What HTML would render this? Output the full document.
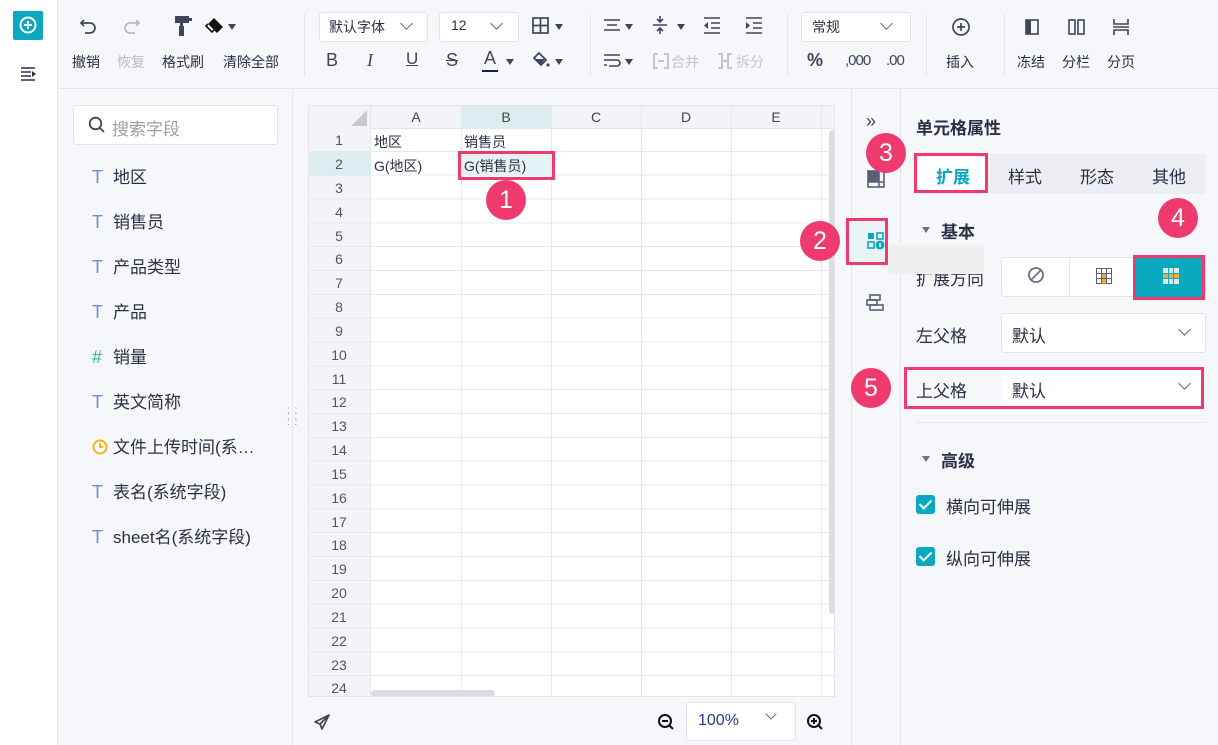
<!DOCTYPE html>
<html><head><meta charset="utf-8">
<style>
*{margin:0;padding:0;box-sizing:border-box}
body{width:1218px;height:745px;overflow:hidden;background:#f6f7fa;font-family:"Liberation Sans","Noto Sans CJK SC",sans-serif;color:#2b2f45;position:relative;font-size:15px}
.a{position:absolute}
.tb{font-size:14px;color:#2b2f45}
.dd{background:#fff;border:1px solid #e1e3ea;border-radius:3px}
.chev{position:absolute;width:9px;height:9px;border-right:1.6px solid #666b7d;border-bottom:1.6px solid #666b7d;transform:rotate(45deg)}
.tri{position:absolute;width:0;height:0;border-left:4px solid transparent;border-right:4px solid transparent;border-top:6px solid #40455c}
.fi{position:absolute;left:92px;font-size:17px;color:#2b2f45}
.fi b{display:inline-block;width:21px;color:#6a8fd8;font-weight:normal;font-size:18px}
.rn{position:absolute;left:308px;width:62px;text-align:center;font-size:14px;color:#555}
.circ{position:absolute;width:40px;height:40px;border-radius:50%;background:#ef3a6e;color:#fff;font-size:25px;text-align:center;line-height:40px}
.pk{position:absolute;border:3px solid #ef3a6e}
.cb{position:absolute;width:19px;height:19px;background:#0aa9bf;border-radius:3px}
.cb:after{content:"";position:absolute;left:6px;top:2px;width:5px;height:10px;border-right:2.5px solid #fff;border-bottom:2.5px solid #fff;transform:rotate(45deg)}
</style></head><body>
<div class="a" style="left:0;top:0;width:58px;height:745px;background:#fff;border-right:1px solid #e3e5ea"></div>
<div class="a" style="left:13px;top:11px;width:30px;height:29px;background:#0aa9bf;border-radius:2px"></div>
<svg class="a" style="left:18px;top:15px" width="20" height="20" viewBox="0 0 20 20"><circle cx="10" cy="10" r="7.5" fill="none" stroke="#fff" stroke-width="2"/><path d="M10 6v8M6 10h8" stroke="#fff" stroke-width="2"/></svg>
<svg class="a" style="left:20px;top:66px" width="18" height="16" viewBox="0 0 18 16"><path d="M1 2h14M1 6h10M1 10h10M1 14h14" stroke="#2b2f45" stroke-width="1.6"/><path d="M12 5l4 3-4 3z" fill="#2b2f45"/></svg>
<div class="a" style="left:58px;top:0;width:1160px;height:89px;background:#f6f7fa;border-bottom:1px solid #e3e5ea"></div>
<svg class="a" style="left:79px;top:17px" width="20" height="18" viewBox="0 0 20 18"><path d="M5 3L2 6l3 3M2 6h9a5 5 0 010 10H6" fill="none" stroke="#40455c" stroke-width="1.7"/></svg>
<svg class="a" style="left:121px;top:17px" width="20" height="18" viewBox="0 0 20 18"><path d="M15 3l3 3-3 3M18 6H9a5 5 0 000 10h5" fill="none" stroke="#b8bbc6" stroke-width="1.7"/></svg>
<svg class="a" style="left:175px;top:14px" width="22" height="24" viewBox="0 0 22 24"><rect x="0" y="2" width="14" height="7" fill="#40455c"/><rect x="14" y="4" width="3" height="3" fill="#40455c"/><rect x="5" y="9" width="3" height="3" fill="#40455c"/><rect x="4" y="12" width="5" height="10" fill="#40455c"/></svg>
<svg class="a" style="left:205px;top:16px" width="20" height="20" viewBox="0 0 20 20"><path d="M9 2l9 9-6 6-9-9z" fill="#111"/><path d="M3 8l-2 2 6 6 2-2" fill="#fff" stroke="#111" stroke-width="1.6"/></svg>
<div class="tri" style="left:228px;top:24px"></div>
<div class="a tb" style="left:72px;top:52px">撤销</div>
<div class="a tb" style="left:117px;top:52px;color:#b8bbc6">恢复</div>
<div class="a tb" style="left:162px;top:52px">格式刷</div>
<div class="a tb" style="left:223px;top:52px">清除全部</div>
<div class="a" style="left:304px;top:14px;width:1px;height:62px;background:#e3e5ea"></div>
<div class="a dd" style="left:319px;top:12px;width:109px;height:30px"></div>
<div class="a tb" style="left:329px;top:17px">默认字体</div>
<div class="chev" style="left:402px;top:19px"></div>
<div class="a dd" style="left:439px;top:12px;width:80px;height:30px"></div>
<div class="a tb" style="left:451px;top:17px">12</div>
<div class="chev" style="left:492px;top:19px"></div>
<svg class="a" style="left:532px;top:17px" width="18" height="18" viewBox="0 0 18 18"><rect x="1" y="1" width="15" height="15" fill="none" stroke="#40455c" stroke-width="1.7"/><path d="M8.5 1v15M1 8.5h15" stroke="#40455c" stroke-width="1.7"/></svg>
<div class="tri" style="left:555px;top:24px"></div>
<div class="a" style="left:326px;top:50px;font-size:18px;color:#40455c">B</div>
<div class="a" style="left:367px;top:50px;font-size:18px;color:#40455c;font-style:italic;font-family:'Liberation Serif',serif">I</div>
<div class="a" style="left:406px;top:49px;font-size:17px;color:#40455c;text-decoration:underline">U</div>
<div class="a" style="left:446px;top:50px;font-size:18px;color:#40455c;text-decoration:line-through">S</div>
<div class="a" style="left:484px;top:48px;font-size:18px;color:#40455c">A</div>
<div class="a" style="left:482px;top:70px;width:16px;height:2px;background:#1a1f4a"></div>
<div class="tri" style="left:506px;top:59px"></div>
<svg class="a" style="left:531px;top:51px" width="20" height="20" viewBox="0 0 20 20"><path d="M8 2l7 7-5 5-7-7z" fill="none" stroke="#40455c" stroke-width="1.8"/><path d="M4 8h10l-4 5z" fill="#40455c"/><circle cx="17" cy="14" r="1.6" fill="#40455c"/></svg>
<div class="tri" style="left:555px;top:59px"></div>
<div class="a" style="left:590px;top:14px;width:1px;height:62px;background:#e3e5ea"></div>
<svg class="a" style="left:603px;top:18px" width="18" height="16" viewBox="0 0 18 16"><path d="M1 2h16M4 7h10M1 12h16" stroke="#40455c" stroke-width="1.6"/></svg>
<div class="tri" style="left:625px;top:24px"></div>
<svg class="a" style="left:652px;top:15px" width="16" height="20" viewBox="0 0 16 20"><path d="M1 10h14M8 1v6M8 13v6M5 4l3 3 3-3M5 16l3-3 3 3" fill="none" stroke="#40455c" stroke-width="1.6"/></svg>
<div class="tri" style="left:677px;top:24px"></div>
<svg class="a" style="left:703px;top:17px" width="18" height="17" viewBox="0 0 18 17"><path d="M1 1h16M8 6h9M8 11h9M1 16h16" stroke="#40455c" stroke-width="1.6"/><path d="M5 5l-4 3.5 4 3.5z" fill="#40455c"/></svg>
<svg class="a" style="left:745px;top:17px" width="18" height="17" viewBox="0 0 18 17"><path d="M1 1h16M8 6h9M8 11h9M1 16h16" stroke="#40455c" stroke-width="1.6"/><path d="M1 5l4 3.5-4 3.5z" fill="#40455c"/></svg>
<svg class="a" style="left:603px;top:53px" width="18" height="16" viewBox="0 0 18 16"><path d="M1 2h16M1 7h13a3 3 0 010 6H6M1 12h3" fill="none" stroke="#40455c" stroke-width="1.6"/></svg>
<div class="tri" style="left:625px;top:59px"></div>
<svg class="a" style="left:653px;top:53px" width="16" height="16" viewBox="0 0 16 16"><path d="M1 1h4M1 1v14h4M11 1h4v14h-4M5 8h6" fill="none" stroke="#c2c5cf" stroke-width="2"/></svg>
<div class="a tb" style="left:671px;top:52px;color:#c2c5cf">合并</div>
<svg class="a" style="left:717px;top:53px" width="16" height="16" viewBox="0 0 16 16"><path d="M1 1h4v14H1M15 1h-4v14h4M5 8h6" fill="none" stroke="#c2c5cf" stroke-width="2"/></svg>
<div class="a tb" style="left:736px;top:52px;color:#c2c5cf">拆分</div>
<div class="a" style="left:787px;top:14px;width:1px;height:62px;background:#e3e5ea"></div>
<div class="a dd" style="left:801px;top:12px;width:110px;height:30px"></div>
<div class="a tb" style="left:812px;top:17px">常规</div>
<div class="chev" style="left:882px;top:19px"></div>
<div class="a" style="left:807px;top:50px;font-size:18px;font-weight:bold;color:#40455c">%</div>
<div class="a" style="left:845px;top:52px;font-size:15px;color:#40455c;letter-spacing:-1px">,000</div>
<div class="a" style="left:886px;top:52px;font-size:15px;color:#40455c;letter-spacing:-1px">.00</div>
<div class="a" style="left:926px;top:14px;width:1px;height:62px;background:#e3e5ea"></div>
<svg class="a" style="left:951px;top:17px" width="20" height="20" viewBox="0 0 20 20"><circle cx="10" cy="10" r="8" fill="none" stroke="#40455c" stroke-width="1.7"/><path d="M10 6v8M6 10h8" stroke="#40455c" stroke-width="1.7"/></svg>
<div class="a tb" style="left:946px;top:52px">插入</div>
<div class="a" style="left:1004px;top:14px;width:1px;height:62px;background:#e3e5ea"></div>
<svg class="a" style="left:1025px;top:19px" width="14" height="16" viewBox="0 0 14 16"><rect x="1" y="1" width="12" height="14" fill="none" stroke="#40455c" stroke-width="1.6"/><rect x="1" y="1" width="5" height="14" fill="#40455c"/></svg>
<svg class="a" style="left:1068px;top:19px" width="18" height="16" viewBox="0 0 18 16"><rect x="1" y="1" width="6" height="14" fill="none" stroke="#40455c" stroke-width="1.6"/><rect x="10" y="1" width="6" height="14" fill="none" stroke="#40455c" stroke-width="1.6"/></svg>
<svg class="a" style="left:1113px;top:18px" width="16" height="18" viewBox="0 0 16 18"><path d="M1 1v5h14V1M1 17v-5h14v5M0 9h16" fill="none" stroke="#40455c" stroke-width="1.6"/></svg>
<div class="a tb" style="left:1017px;top:52px">冻结</div>
<div class="a tb" style="left:1062px;top:52px">分栏</div>
<div class="a tb" style="left:1107px;top:52px">分页</div>
<div class="a" style="left:292px;top:89px;width:1px;height:656px;background:#e6e8ee"></div>
<div class="a" style="left:73px;top:105px;width:205px;height:40px;background:#fff;border:1px solid #e1e3ea;border-radius:3px"></div>
<svg class="a" style="left:88px;top:116px" width="18" height="18" viewBox="0 0 18 18"><circle cx="7.5" cy="7.5" r="5.8" fill="none" stroke="#40455c" stroke-width="1.8"/><path d="M12 12l4 4" stroke="#40455c" stroke-width="1.8"/></svg>
<div class="a" style="left:112px;top:115px;font-size:17px;color:#9a9eab">搜索字段</div>
<div class="fi" style="top:163px"><b>T</b>地区</div>
<div class="fi" style="top:208px"><b>T</b>销售员</div>
<div class="fi" style="top:253px"><b>T</b>产品类型</div>
<div class="fi" style="top:298px"><b>T</b>产品</div>
<div class="fi" style="top:343px"><b style="color:#2fb5a0">#</b>销量</div>
<div class="fi" style="top:388px"><b>T</b>英文简称</div>
<div class="fi" style="top:433px"><b><svg width="16" height="16" viewBox="0 0 16 16" style="vertical-align:-2px"><circle cx="8" cy="8" r="6.5" fill="none" stroke="#f2b51c" stroke-width="2"/><path d="M8 4v4h3" fill="none" stroke="#f2b51c" stroke-width="2"/></svg></b>文件上传时间(系…</div>
<div class="fi" style="top:478px"><b>T</b>表名(系统字段)</div>
<div class="fi" style="top:523px"><b>T</b>sheet名(系统字段)</div>
<div class="a" style="left:287px;top:408px;font-size:10px;color:#999;line-height:6px;letter-spacing:1px">: :<br>: :<br>: :</div>
<div class="a" style="left:308px;top:105px;width:527px;height:592px;background:#fff;border:1px solid #e3e5ea;overflow:hidden">
 <div class="a" style="left:0;top:0;width:527px;height:23px;background:#f3f4f7;border-bottom:1px solid #e3e5ea"></div>
 <div class="a" style="left:0;top:0;width:62px;height:592px;background:#f3f4f7;border-right:1px solid #e3e5ea"></div>
 <div class="a" style="left:152px;top:0;width:90px;height:23px;background:#dcedf0"></div>
 <div class="a" style="left:0;top:46px;width:62px;height:24px;background:#dcedf0"></div>
 <div class="a" style="left:0;top:22px;width:527px;height:570px;background:repeating-linear-gradient(to bottom,transparent 0,transparent 22.83px,#e6e8ed 22.83px,#e6e8ed 23.83px)"></div>
 <div class="a" style="left:152px;top:0;width:1px;height:592px;background:#e6e8ed"></div>
 <div class="a" style="left:242px;top:0;width:1px;height:592px;background:#e6e8ed"></div>
 <div class="a" style="left:332px;top:0;width:1px;height:592px;background:#e6e8ed"></div>
 <div class="a" style="left:422px;top:0;width:1px;height:592px;background:#e6e8ed"></div>
 <div class="a" style="left:512px;top:0;width:1px;height:592px;background:#e6e8ed"></div>
 <svg class="a" style="left:42px;top:4px" width="16" height="16"><path d="M16 0V16H0z" fill="#c8cad2"/></svg>
 <div class="a" style="left:62px;top:3px;width:90px;text-align:center;font-size:14px;color:#444">A</div>
 <div class="a" style="left:152px;top:3px;width:90px;text-align:center;font-size:14px;color:#444">B</div>
 <div class="a" style="left:242px;top:3px;width:90px;text-align:center;font-size:14px;color:#444">C</div>
 <div class="a" style="left:332px;top:3px;width:90px;text-align:center;font-size:14px;color:#444">D</div>
 <div class="a" style="left:422px;top:3px;width:90px;text-align:center;font-size:14px;color:#444">E</div>
 <div class="a" style="left:65px;top:26px;font-size:14px">地区</div>
 <div class="a" style="left:155px;top:26px;font-size:14px">销售员</div>
 <div class="a" style="left:65px;top:50px;font-size:14px">G(地区)</div>
 <div class="a" style="left:152px;top:46px;width:90px;height:24px;background:#e4f2f5"></div>
 <div class="a" style="left:155px;top:50px;font-size:14px">G(销售员)</div>
 <div class="a" style="left:62px;top:584px;width:124px;height:7px;background:#dcdde2;border-radius:4px"></div>
 <div class="a" style="left:520px;top:24px;width:6px;height:484px;background:#dcdde2;border-radius:3px"></div>
</div>
<div class="rn" style="top:132px">1</div><div class="rn" style="top:156px">2</div><div class="rn" style="top:180px">3</div><div class="rn" style="top:204px">4</div><div class="rn" style="top:228px">5</div><div class="rn" style="top:251px">6</div><div class="rn" style="top:275px">7</div><div class="rn" style="top:299px">8</div><div class="rn" style="top:323px">9</div><div class="rn" style="top:347px">10</div><div class="rn" style="top:371px">11</div><div class="rn" style="top:394px">12</div><div class="rn" style="top:418px">13</div><div class="rn" style="top:442px">14</div><div class="rn" style="top:466px">15</div><div class="rn" style="top:490px">16</div><div class="rn" style="top:514px">17</div><div class="rn" style="top:537px">18</div><div class="rn" style="top:561px">19</div><div class="rn" style="top:585px">20</div><div class="rn" style="top:609px">21</div><div class="rn" style="top:633px">22</div><div class="rn" style="top:657px">23</div><div class="rn" style="top:680px">24</div>
<div class="pk" style="left:458px;top:151px;width:97px;height:29px"></div>
<div class="circ" style="left:486px;top:180px">1</div>
<svg class="a" style="left:313px;top:713px" width="18" height="18" viewBox="0 0 18 18"><path d="M16 2L2 9l5 2 2 5z M7 11l9-9" fill="none" stroke="#40455c" stroke-width="1.7" stroke-linejoin="round"/></svg>
<svg class="a" style="left:657px;top:713px" width="18" height="18" viewBox="0 0 18 18"><circle cx="8" cy="8" r="6" fill="none" stroke="#111" stroke-width="2"/><path d="M5 8h6M12.5 12.5l3.5 3.5" stroke="#111" stroke-width="2"/></svg>
<div class="a dd" style="left:686px;top:702px;width:110px;height:39px"></div>
<div class="a" style="left:698px;top:712px;font-size:16px;color:#2a3a8a">100%</div>
<div class="chev" style="left:767px;top:710px;width:8px;height:8px"></div>
<svg class="a" style="left:806px;top:713px" width="18" height="18" viewBox="0 0 18 18"><circle cx="8" cy="8" r="6" fill="none" stroke="#111" stroke-width="2"/><path d="M5 8h6M8 5v6M12.5 12.5l3.5 3.5" stroke="#111" stroke-width="2"/></svg>
<div class="a" style="left:851px;top:89px;width:1px;height:656px;background:#e3e5ea"></div>
<div class="a" style="left:900px;top:89px;width:1px;height:656px;background:#e3e5ea"></div>
<div class="a" style="left:866px;top:111px;font-size:18px;color:#40455c">»</div>
<svg class="a" style="left:867px;top:170px" width="18" height="18" viewBox="0 0 18 18"><rect x="1" y="1" width="16" height="16" fill="none" stroke="#5a5f75" stroke-width="1.6"/><rect x="1" y="1" width="11" height="11" fill="#5a5f75"/><path d="M12 12h5M12 1v16M1 12h16" stroke="#5a5f75" stroke-width="1.6"/></svg>
<div class="a" style="left:848px;top:219px;width:39px;height:44px;background:#e8f4f6"></div>
<svg class="a" style="left:867px;top:232px" width="18" height="18" viewBox="0 0 18 18"><rect x="1" y="1" width="6" height="6" fill="#0aa9bf"/><rect x="10" y="1" width="6" height="6" fill="none" stroke="#0aa9bf" stroke-width="1.6"/><rect x="1" y="10" width="6" height="6" fill="none" stroke="#0aa9bf" stroke-width="1.6"/><circle cx="13" cy="13" r="4.5" fill="#0aa9bf"/><path d="M13 11v4" stroke="#fff" stroke-width="1.5"/></svg>
<div class="pk" style="left:846px;top:218px;width:42px;height:47px"></div>
<div class="circ" style="left:800px;top:221px">2</div>
<svg class="a" style="left:866px;top:294px" width="18" height="18" viewBox="0 0 18 18"><rect x="4" y="1" width="10" height="5" fill="none" stroke="#5a5f75" stroke-width="1.6"/><rect x="1" y="6" width="10" height="5" fill="none" stroke="#5a5f75" stroke-width="1.6"/><rect x="4" y="11" width="13" height="5" fill="none" stroke="#5a5f75" stroke-width="1.6"/></svg>
<div class="circ" style="left:866px;top:133px">3</div>
<div class="a" style="left:916px;top:114px;font-size:17px;font-weight:bold;color:#2b2f45">单元格属性</div>
<div class="a" style="left:914px;top:154px;width:292px;height:40px;background:#eceef3;border-radius:3px"></div>
<div class="a" style="left:917px;top:157px;width:68px;height:34px;background:#fff"></div>
<div class="a" style="left:936px;top:163px;font-size:17px;font-weight:bold;color:#0aa9bf">扩展</div>
<div class="pk" style="left:914px;top:153px;width:74px;height:40px"></div>
<div class="a" style="left:1008px;top:163px;font-size:17px">样式</div>
<div class="a" style="left:1080px;top:163px;font-size:17px">形态</div>
<div class="a" style="left:1152px;top:163px;font-size:17px">其他</div>
<div class="tri" style="left:922px;top:227px;border-top-color:#6b6f82"></div>
<div class="a" style="left:941px;top:218px;font-size:17px;font-weight:bold">基本</div>
<div class="circ" style="left:1158px;top:198px">4</div>
<div class="a" style="left:916px;top:265px;font-size:17px">扩展方向</div>
<div class="a" style="left:888px;top:245px;width:96px;height:29px;background:#efeff0"></div>
<div class="a" style="left:1001px;top:257px;width:205px;height:40px;background:#fff;border:1px solid #e1e3ea;border-radius:3px"></div>
<div class="a" style="left:1069px;top:258px;width:1px;height:38px;background:#e1e3ea"></div>
<svg class="a" style="left:1027px;top:266px" width="18" height="18" viewBox="0 0 18 18"><circle cx="9" cy="9" r="7" fill="none" stroke="#6b6f82" stroke-width="1.8"/><path d="M4 14L14 4" stroke="#6b6f82" stroke-width="1.8"/></svg>
<svg class="a" style="left:1096px;top:268px" width="16" height="16" viewBox="0 0 16 16"><rect x="0.5" y="0.5" width="15" height="15" fill="#fff" stroke="#5a5f75"/><rect x="5.5" y="5.5" width="5" height="10" fill="#f2a93b"/><path d="M5.5 0v16M10.5 0v16M0 5.5h16M0 10.5h16" stroke="#5a5f75"/></svg>
<div class="a" style="left:1136px;top:257px;width:66px;height:40px;background:#0aa9bf"></div>
<svg class="a" style="left:1163px;top:268px" width="16" height="16" viewBox="0 0 16 16"><rect x="0.5" y="0.5" width="15" height="15" fill="#d6f1f4" stroke="#d6f1f4"/><rect x="0" y="5.5" width="16" height="5" fill="#f2a93b"/><path d="M5.5 0v16M10.5 0v16M0 5.5h16M0 10.5h16" stroke="#0aa9bf"/></svg>
<div class="pk" style="left:1133px;top:255px;width:72px;height:45px"></div>
<div class="a" style="left:916px;top:322px;font-size:17px">左父格</div>
<div class="a dd" style="left:1001px;top:313px;width:205px;height:40px"></div>
<div class="a" style="left:1012px;top:322px;font-size:17px">默认</div>
<div class="chev" style="left:1180px;top:325px"></div>
<div class="a" style="left:1001px;top:370px;width:200px;height:36px;background:#fff"></div>
<div class="a" style="left:916px;top:377px;font-size:17px">上父格</div>
<div class="a" style="left:1012px;top:377px;font-size:17px">默认</div>
<div class="chev" style="left:1180px;top:379px"></div>
<div class="pk" style="left:904px;top:367px;width:300px;height:42px"></div>
<div class="circ" style="left:851px;top:368px">5</div>
<div class="a" style="left:916px;top:422px;width:290px;height:1px;background:#e3e5ea"></div>
<div class="tri" style="left:922px;top:456px;border-top-color:#6b6f82"></div>
<div class="a" style="left:941px;top:447px;font-size:17px;font-weight:bold">高级</div>
<div class="cb" style="left:916px;top:495px"></div>
<div class="a" style="left:946px;top:493px;font-size:17px">横向可伸展</div>
<div class="cb" style="left:916px;top:547px"></div>
<div class="a" style="left:946px;top:545px;font-size:17px">纵向可伸展</div>
</body></html>
